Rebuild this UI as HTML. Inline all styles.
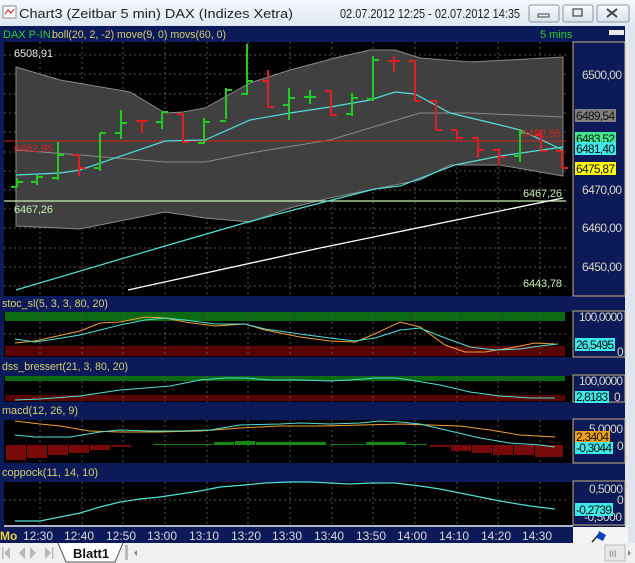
<!DOCTYPE html>
<html><head><meta charset="utf-8"><style>
html,body{margin:0;padding:0;width:635px;height:563px;overflow:hidden;background:#f0f0f0}
svg{display:block}
text{font-family:"Liberation Sans",sans-serif}
</style></head><body>
<svg width="635" height="563" viewBox="0 0 635 563" xmlns="http://www.w3.org/2000/svg">
<defs>
<linearGradient id="tb" x1="0" y1="0" x2="0" y2="1"><stop offset="0" stop-color="#f4f7fb"/><stop offset="1" stop-color="#dfe8f2"/></linearGradient>
<linearGradient id="bt" x1="0" y1="0" x2="0" y2="1"><stop offset="0" stop-color="#f8fafc"/><stop offset="1" stop-color="#d9e2ec"/></linearGradient>
</defs>
<!-- title bar -->
<rect x="0" y="0" width="635" height="26" fill="url(#tb)"/>
<rect x="3" y="6" width="13" height="12" fill="#fff" stroke="#888"/><path d="M5 14 L8 10 L11 13 L14 9" stroke="#c00" fill="none"/>
<text x="19" y="18" font-size="13" fill="#222" textLength="274" lengthAdjust="spacingAndGlyphs">Chart3 (Zeitbar 5 min)  DAX (Indizes Xetra)</text>
<text x="340" y="18" font-size="12.5" fill="#222" textLength="180" lengthAdjust="spacingAndGlyphs">02.07.2012 12:25 - 02.07.2012 14:35</text>
<rect x="529" y="5" width="30" height="17" rx="2" fill="url(#bt)" stroke="#8a96a6"/><rect x="538" y="14" width="11" height="3" fill="none" stroke="#444"/>
<rect x="563" y="5" width="30" height="17" rx="2" fill="url(#bt)" stroke="#8a96a6"/><rect x="573" y="9" width="9" height="7" fill="none" stroke="#444" stroke-width="1.2"/>
<rect x="597" y="5" width="32" height="17" rx="2" fill="url(#bt)" stroke="#8a96a6"/><path d="M607 9 L617 17 M617 9 L607 17" stroke="#444" stroke-width="2"/>
<!-- frame -->
<rect x="0" y="26" width="628" height="517" fill="#0d1a5a"/>
<rect x="628" y="26" width="7" height="537" fill="#dde6f0"/>
<rect x="625" y="26" width="3" height="517" fill="#dfe8f2"/>
<!-- main header -->
<text x="3" y="38" font-size="11" fill="#26d026">DAX P-IN.</text>
<text x="52" y="38" font-size="11" fill="#d8d070" textLength="174" lengthAdjust="spacingAndGlyphs">boll(20, 2, -2) move(9, 0) movs(60, 0)</text>
<text x="540" y="38" font-size="11" fill="#26d026">5 mins</text>
<rect x="609" y="30" width="15" height="5" fill="#e8e8e8"/>
<!-- main plot -->
<rect x="4" y="42" width="569" height="254" fill="#000"/>
<g stroke="#555" stroke-dasharray="2,3" stroke-width="1">
<path d="M40 42V296M82 42V296M123 42V296M165 42V296M207 42V296M248 42V296M290 42V296M332 42V296M373 42V296M415 42V296M457 42V296M498 42V296M540 42V296"/>
<path d="M4 55H566M4 74H566M4 94H566M4 113H566M4 132H566M4 152H566M4 171H566M4 190H566M4 209H566M4 228H566M4 248H566M4 267H566M4 286H566"/>
</g>
<!-- bollinger band -->
<path d="M16 67 L60 80 L130 92 L165 113 L183 112 L205 108 L250 83 L290 70 L335 58 L370 50 L395 50 L420 58 L470 62 L510 60 L563 57 L563 176 L540 172 L500 165 L450 165 L420 180 L380 188 L330 198 L290 208 L250 222 L205 218 L165 212 L80 229 L16 226 Z" fill="#404040" stroke="#8a8a8a" stroke-width="1"/>
<path d="M16 150 L80 155 L165 162 L205 162 L250 153 L330 140 L420 113 L470 113 L563 117" fill="none" stroke="#8a8a8a"/>
<!-- horizontal lines -->
<path d="M4 141H566" stroke="#d82020" stroke-width="1"/>
<path d="M4 201H566" stroke="#c8f0b0" stroke-width="1.2"/>
<!-- moving averages -->
<path d="M16 175 L60 173 L80 170 L165 141 L205 140 L250 120 L290 113 L330 107 L370 100 L395 92 L415 94 L450 113 L500 125 L520 130 L563 150" fill="none" stroke="#50e0d8" stroke-width="1.2"/>
<path d="M16 290 L165 246 L248 222 L320 203 L375 189 L400 186 L455 165 L500 156 L563 147" fill="none" stroke="#50e0d8" stroke-width="1.2"/>
<path d="M128 290 L320 248 L563 198" fill="none" stroke="#fff" stroke-width="1.3"/>
<!-- bars -->
<g stroke-width="2" fill="none">
<g stroke="#22cc22">
<path d="M17 178V187M11 187H17M17 182H23"/>
<path d="M37 175V185M31 182H37M37 177H43"/>
<path d="M58 142V180M52 178H58M58 155H64"/>
<path d="M100 133V171M94 168H100M100 133H106"/>
<path d="M121 110V139M115 133H121M121 123H127"/>
<path d="M162 112V129M156 122H162M162 112H168"/>
<path d="M204 118V144M198 143H204M204 122H210"/>
<path d="M226 88V119M220 121H226M226 90H232"/>
<path d="M247 44V95M241 94H247M247 81H253"/>
<path d="M289 88V120M283 105H289M289 98H295"/>
<path d="M310 90V104M304 97H316"/>
<path d="M352 93V116M346 114H352M352 98H358"/>
<path d="M373 56V101M367 99H373M373 60H379"/>
<path d="M520 129V162M514 156H520M520 133H526"/>
</g>
<g stroke="#e02020">
<path d="M79 155V176M73 155H79M79 168H85"/>
<path d="M142 121V133M136 121H148"/>
<path d="M183 114V142M177 114H183M183 142H189"/>
<path d="M268 70V107M262 81H268M268 107H274"/>
<path d="M331 90V116M325 91H331M331 115H337"/>
<path d="M394 56V72M388 61H400"/>
<path d="M415 61V101M409 61H415M415 101H421"/>
<path d="M436 100V130M430 101H436M436 130H442"/>
<path d="M457 130V140M451 130H457M457 138H463"/>
<path d="M478 138V158M472 138H478M478 150H484"/>
<path d="M499 148V165M493 150H499M499 157H505"/>
<path d="M541 130V150M535 135H541M541 151H547"/>
<path d="M562 150V168M556 151H562M562 168H568"/>
</g>
</g>
<!-- labels in plot -->
<g font-size="11" lengthAdjust="spacingAndGlyphs">
<text x="14" y="57" fill="#e8e8e8" textLength="39">6508,91</text>
<text x="14" y="152" fill="#d82020" textLength="39">6482,95</text>
<text x="14" y="213" fill="#c8f0b0" textLength="39">6467,26</text>
<text x="522" y="137" fill="#d82020" textLength="39">6482,95</text>
<text x="523" y="197" fill="#c8f0b0" textLength="39">6467,26</text>
<text x="523" y="287" fill="#c8f0b0" textLength="39">6443,78</text>
</g>
<!-- right axis main -->
<rect x="573" y="42" width="52" height="254" fill="#0d1a5a" stroke="#c8b080"/>
<g font-size="12" lengthAdjust="spacingAndGlyphs">
<text x="582" y="79" fill="#d8d8c0" textLength="40">6500,00</text>
<rect x="575" y="109" width="41" height="13" fill="#808080"/><text x="576" y="120" fill="#111" textLength="39">6489,54</text>
<rect x="575" y="132" width="41" height="12" fill="#40e890"/><text x="576" y="143" fill="#111" textLength="39">6483,52</text>
<rect x="575" y="142" width="41" height="13" fill="#40e8e8"/><text x="576" y="153" fill="#111" textLength="39">6481,40</text>
<rect x="575" y="162" width="41" height="13" fill="#ffff00"/><text x="576" y="173" fill="#111" textLength="39">6475,87</text>
<text x="582" y="194" fill="#d8d8c0" textLength="40">6470,00</text>
<text x="582" y="232" fill="#d8d8c0" textLength="40">6460,00</text>
<text x="582" y="271" fill="#d8d8c0" textLength="40">6450,00</text>
</g>

<!-- stoc -->
<text x="2" y="307" font-size="11" fill="#d8d070" textLength="106" lengthAdjust="spacingAndGlyphs">stoc_sl(5, 3, 3, 80, 20)</text>
<rect x="4" y="312" width="569" height="45" fill="#000"/>
<rect x="5" y="312" width="560" height="9" fill="#0b6a12"/>
<rect x="5" y="346" width="560" height="10" fill="#5a0505"/>
<g stroke="#555" stroke-dasharray="2,3"><path d="M40 312V357M82 312V357M123 312V357M165 312V357M207 312V357M248 312V357M290 312V357M332 312V357M373 312V357M415 312V357M457 312V357M498 312V357M540 312V357M4 334H566"/></g>
<path d="M15 343 L35 341 L62 335 L80 331 L100 323 L120 322 L145 317 L165 318 L185 322 L215 326 L245 324 L265 330 L300 337 L330 341 L355 342 L370 336 L400 322 L420 327 L445 345 L465 352 L485 352 L510 348 L535 343 L555 344" fill="none" stroke="#f0a030"/>
<path d="M15 339 L35 342 L62 338 L80 335 L100 330 L120 325 L145 320 L165 318 L185 320 L215 324 L245 324 L265 329 L300 334 L330 338 L355 341 L375 338 L400 330 L420 328 L440 336 L470 347 L495 350 L520 349 L540 346 L558 344" fill="none" stroke="#50e0d8"/>
<rect x="573" y="311" width="52" height="46" fill="#0d1a5a" stroke="#c8b080"/>
<g font-size="12" lengthAdjust="spacingAndGlyphs">
<text x="579" y="321" fill="#d8d8c0" textLength="44">100,0000</text>
<rect x="575" y="338" width="40" height="13" fill="#40e8e8"/><text x="576" y="349" fill="#111" textLength="38">26,5495</text>
<text x="617" y="356" fill="#d8d8c0">0</text>
</g>

<!-- dss -->
<text x="2" y="370" font-size="11" fill="#d8d070" textLength="126" lengthAdjust="spacingAndGlyphs">dss_bressert(21, 3, 80, 20)</text>
<rect x="4" y="376" width="569" height="26" fill="#000"/>
<rect x="5" y="376" width="560" height="5" fill="#0b6a12"/>
<rect x="5" y="395" width="560" height="6" fill="#5a0505"/>
<g stroke="#555" stroke-dasharray="2,3"><path d="M40 376V402M82 376V402M123 376V402M165 376V402M207 376V402M248 376V402M290 376V402M332 376V402M373 376V402M415 376V402M457 376V402M498 376V402M540 376V402"/></g>
<path d="M15 400 L40 399 L80 396 L120 390 L170 386 L200 380 L225 378 L245 378 L270 380 L300 380 L330 381 L350 380 L375 378 L395 378 L410 380 L440 385 L470 392 L500 396 L530 398 L555 398" fill="none" stroke="#50e0d8"/>
<rect x="573" y="375" width="52" height="27" fill="#0d1a5a" stroke="#c8b080"/>
<g font-size="12" lengthAdjust="spacingAndGlyphs">
<text x="579" y="385" fill="#d8d8c0" textLength="44">100,0000</text>
<rect x="575" y="391" width="34" height="12" fill="#40e8e8"/><text x="576" y="401" fill="#111" textLength="32">2,8183</text>
<text x="614" y="401" fill="#d8d8c0">0</text>
</g>

<!-- macd -->
<text x="2" y="414" font-size="11" fill="#d8d070" textLength="76" lengthAdjust="spacingAndGlyphs">macd(12, 26, 9)</text>
<rect x="4" y="420" width="569" height="43" fill="#000"/>
<g stroke="#555" stroke-dasharray="2,3"><path d="M40 420V463M82 420V463M123 420V463M165 420V463M207 420V463M248 420V463M290 420V463M332 420V463M373 420V463M415 420V463M457 420V463M498 420V463M540 420V463"/></g>
<g fill="#7a0a0a">
<rect x="6" y="445" width="20" height="15"/><rect x="27" y="445" width="20" height="13"/><rect x="48" y="445" width="20" height="10"/><rect x="69" y="445" width="20" height="8"/><rect x="90" y="445" width="20" height="5"/><rect x="111" y="445" width="20" height="2"/>
<rect x="430" y="445" width="20" height="2"/><rect x="451" y="445" width="20" height="6"/><rect x="472" y="445" width="20" height="8"/><rect x="493" y="445" width="20" height="10"/><rect x="514" y="445" width="20" height="10"/><rect x="535" y="445" width="28" height="12"/>
</g>
<g fill="#138a13">
<rect x="153" y="444" width="60" height="1"/><rect x="214" y="442" width="20" height="3"/><rect x="235" y="441" width="20" height="4"/><rect x="256" y="442" width="70" height="3"/><rect x="330" y="444" width="35" height="1"/><rect x="366" y="442" width="40" height="3"/><rect x="407" y="444" width="20" height="1"/>
</g>
<path d="M15 421 L40 424 L60 426 L90 431 L120 432 L160 432 L200 431 L240 428 L280 426 L320 426 L360 425 L400 424 L430 425 L460 426 L490 430 L520 435 L555 437" fill="none" stroke="#f0a030"/>
<path d="M15 435 L35 437 L70 437 L100 432 L120 430 L150 431 L180 431 L210 430 L240 425 L280 424 L300 423 L330 424 L360 423 L380 421 L400 422 L420 424 L450 431 L480 438 L510 443 L540 445 L555 447" fill="none" stroke="#50e0d8"/>
<rect x="573" y="419" width="52" height="44" fill="#0d1a5a" stroke="#c8b080"/>
<g font-size="12" lengthAdjust="spacingAndGlyphs">
<text x="589" y="433" fill="#d8d8c0" textLength="34">5,0000</text>
<rect x="575" y="431" width="35" height="12" fill="#f0a010"/><text x="576" y="441" fill="#111" textLength="33">2,3404</text>
<rect x="575" y="442" width="38" height="12" fill="#40e8e8"/><text x="576" y="452" fill="#111" textLength="36">-0,3044</text>
<text x="617" y="450" fill="#d8d8c0">0</text>
</g>

<!-- coppock -->
<text x="2" y="476" font-size="11" fill="#d8d070" textLength="96" lengthAdjust="spacingAndGlyphs">coppock(11, 14, 10)</text>
<rect x="4" y="482" width="569" height="43" fill="#000"/>
<g stroke="#555" stroke-dasharray="2,3"><path d="M40 482V525M82 482V525M123 482V525M165 482V525M207 482V525M248 482V525M290 482V525M332 482V525M373 482V525M415 482V525M457 482V525M498 482V525M540 482V525M4 500H566"/></g>
<path d="M15 521 L40 521 L60 517 L80 513 L100 507 L120 502 L140 499 L160 497 L180 494 L200 491 L220 487 L245 485 L265 483 L290 482 L310 482 L330 483 L350 484 L370 483 L395 483 L420 486 L440 489 L470 495 L500 501 L530 506 L555 509" fill="none" stroke="#50e0d8" stroke-width="1.2"/>
<rect x="573" y="481" width="52" height="44" fill="#0d1a5a" stroke="#c8b080"/>
<g font-size="12" lengthAdjust="spacingAndGlyphs">
<text x="589" y="493" fill="#d8d8c0" textLength="34">0,5000</text>
<text x="617" y="504" fill="#d8d8c0">0</text>
<text x="584" y="521" fill="#d8d8c0" textLength="38">-0,5000</text>
<rect x="575" y="503" width="38" height="13" fill="#40e8e8"/><text x="576" y="514" fill="#111" textLength="36">-0,2739</text>
</g>
<path d="M4 526H573" stroke="#e8e8e8" stroke-width="1.5"/>

<!-- time axis -->
<text x="0" y="540" font-size="12" font-weight="bold" fill="#e8d040">Mo</text>
<g font-size="12" fill="#d8d8d8" text-anchor="middle">
<text x="38" y="540">12:30</text><text x="79" y="540">12:40</text><text x="121" y="540">12:50</text><text x="162" y="540">13:00</text><text x="204" y="540">13:10</text><text x="246" y="540">13:20</text><text x="287" y="540">13:30</text><text x="329" y="540">13:40</text><text x="371" y="540">13:50</text><text x="412" y="540">14:00</text><text x="454" y="540">14:10</text><text x="496" y="540">14:20</text><text x="537" y="540">14:30</text>
</g>
<rect x="573" y="527" width="55" height="16" fill="#f4f4f4"/>
<path d="M592 542 L600 533" stroke="#222" stroke-width="1.5"/><path d="M599 531 L606 535 L603 541 L597 538 Z" fill="#1040c0"/>

<!-- bottom tabs -->
<rect x="0" y="543" width="635" height="20" fill="#f0f0f0"/>
<g fill="#b8b8b8">
<path d="M10 547 L4 553 L10 559Z"/><rect x="2" y="547" width="1.5" height="12"/>
<path d="M25 547 L19 553 L25 559Z"/>
<path d="M30 547 L36 553 L30 559Z"/>
<path d="M45 547 L51 553 L45 559Z"/><rect x="52" y="547" width="1.5" height="12"/>
</g>
<path d="M58 543 L66 562 L115 562 L123 543" fill="#fff" stroke="#555"/>
<text x="73" y="558" font-size="13" font-weight="bold" fill="#111" font-family="'DejaVu Sans',sans-serif">Blatt1</text>
<rect x="125" y="545" width="3" height="15" fill="#bbb"/>
<path d="M137 550 L134 553 L137 556Z" fill="#888"/>
<rect x="605" y="545" width="20" height="16" fill="#e8e8e8" stroke="#bbb"/>
<text x="609" y="557" font-size="9" fill="#888">III</text>
<path d="M628 550 L631 553 L628 556Z" fill="#888"/>
</svg>
</body></html>
